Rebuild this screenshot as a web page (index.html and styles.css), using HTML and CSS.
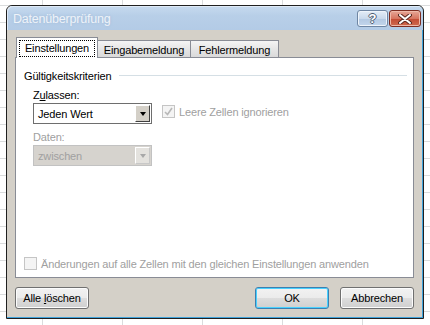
FILE: index.html
```html
<!DOCTYPE html>
<html lang="de">
<head>
<meta charset="UTF-8" />
<title>Datenüberprüfung</title>
<link rel="stylesheet" href="styles.css">
</head>
<body>

<div class="window">
  <div class="titlebar">
    <span class="title">Datenüberprüfung</span>
    <div class="caption-buttons">
      <div class="cap help">?</div>
      <div class="cap close">
        <svg width="14" height="10" viewBox="0 0 14 10">
          <path d="M2 1 L12 9 M12 1 L2 9" stroke="#5b2a22" stroke-width="4" stroke-linecap="round" />
          <path d="M2 1 L12 9 M12 1 L2 9" stroke="#ffffff" stroke-width="2" stroke-linecap="round" />
        </svg>
      </div>
    </div>
  </div>

  <div class="client">
    <div class="tabs">
      <div class="tab active"><span class="focus">Einstellungen</span></div>
      <div class="tab tab-input">Eingabemeldung</div>
      <div class="tab tab-error">Fehlermeldung</div>
    </div>

    <div class="panel">
      <div class="group-title">
        <span>Gültigkeitskriterien</span>
        <span class="rule"></span>
      </div>

      <div class="criteria">
        <div class="label">Z<u>u</u>lassen:</div>
        <div class="row">
          <div class="combo">
            <span class="combo-text">Jeden Wert</span>
            <span class="drop"><span class="arrow"></span></span>
          </div>
          <div class="check disabled">
            <span class="box checked">
              <svg width="11" height="11" viewBox="0 0 11 11">
                <path d="M2 6 L4.5 8.5 L9 2" fill="none" stroke="#b8b8b8" stroke-width="1.6" />
              </svg>
            </span>
            <span>Leere Zellen ignorieren</span>
          </div>
        </div>
        <div class="label disabled">Daten:</div>
        <div class="combo disabled">
          <span class="combo-text">zwischen</span>
          <span class="drop"><span class="arrow"></span></span>
        </div>
      </div>

      <div class="spacer"></div>

      <div class="check disabled">
        <span class="box"></span>
        <span>Änderungen auf alle Zellen mit den gleichen Einstellungen anwenden</span>
      </div>
    </div>

    <div class="buttons">
      <div class="btn"><span>Alle <u>l</u>öschen</span></div>
      <div class="spacer"></div>
      <div class="btn default">OK</div>
      <div class="btn">Abbrechen</div>
    </div>
  </div>
</div>

</body>
</html>
```

FILE: styles.css
```css
body {
  margin: 0;
  width: 430px;
  height: 325px;
  overflow: hidden;
  background-color: #ffffff;
  background-image:
    linear-gradient(to right, #dadcdd 1px, transparent 1px),
    linear-gradient(to bottom, #dadcdd 1px, transparent 1px);
  background-size: 80px 17px;
  background-position: 42px 5px;
  font-family: "Liberation Sans", Arial, sans-serif;
  font-size: 11px;
  letter-spacing: -0.15px;
  color: #000;
}
.window {
  margin: 5px 0 0 6px;
  width: 418px;
  height: 314px;
  box-sizing: border-box;
  border: 1px solid #202020;
  border-radius: 6px 6px 0 0;
  background: #d4d0c8;
  box-shadow: inset -1px -1px 0 #3fa3db;
  display: flex;
  flex-direction: column;
  overflow: hidden;
}
.titlebar {
  height: 24px;
  flex: none;
  display: flex;
  align-items: flex-start;
  background: linear-gradient(#c6daef, #b8cfe8 40%, #b3cbe6);
  box-shadow: inset 1px 1px 0 #dfeaf6;
  border-radius: 5px 5px 0 0;
}
.title {
  margin: 6px 0 0 6px;
  font-size: 12.5px;
  letter-spacing: -0.2px;
  color: #eef3f9;
  text-shadow: 0 0 3px #9fb9d6;
}
.caption-buttons {
  margin: 4px 2px 0 auto;
  display: flex;
  gap: 1px;
}
.cap {
  height: 17px;
  box-sizing: border-box;
  border-radius: 3px;
  display: flex;
  align-items: center;
  justify-content: center;
}
.help {
  width: 31px;
  border: 1px solid #6f86a3;
  background: linear-gradient(#e4edf7, #c9d9ec 50%, #b2c8e2 51%, #c3d6ec);
  box-shadow: inset 0 0 0 1px #eef4fb;
  color: #fff;
  font-weight: bold;
  font-size: 13px;
  text-shadow: 1px 0 0 #4d5d72, -1px 0 0 #4d5d72, 0 1px 0 #4d5d72, 0 -1px 0 #4d5d72;
}
.close {
  width: 32px;
  border: 1px solid #7d2d22;
  background: linear-gradient(#e6a797, #d77560 50%, #c24a33 51%, #cf6a4f);
  box-shadow: inset 0 0 0 1px #efb9a9;
}
.client {
  flex: 1;
  display: flex;
  flex-direction: column;
  padding: 7px 9px 9px 8px;
}
.tabs {
  height: 21px;
  display: flex;
  align-items: flex-end;
  margin-bottom: -1px;
  position: relative;
  z-index: 1;
}
.tab {
  height: 18px;
  box-sizing: border-box;
  border: 1px solid #898c95;
  border-left: none;
  background: linear-gradient(#f4f4f4, #e6e6e6 50%, #dadada);
  display: flex;
  align-items: center;
  justify-content: center;
  padding-top: 1px;
}
.tab.active {
  height: 21px;
  width: 82px;
  margin-left: 1px;
  border-left: 1px solid #898c95;
  border-bottom: none;
  background: #ffffff;
  padding-top: 0;
}
.tab-input {
  width: 93px;
}
.tab-error {
  width: 88px;
}
.focus {
  border: 1px dotted #000;
  padding: 1px 5px 2px;
}
.panel {
  height: 221px;
  box-sizing: border-box;
  border: 1px solid #898c95;
  background: #ffffff;
  display: flex;
  flex-direction: column;
  padding: 11px 6px 7px 8px;
}
.group-title {
  display: flex;
  align-items: center;
  height: 13px;
}
.rule {
  flex: 1;
  height: 1px;
  margin-left: 8px;
  background: #d5dfe5;
}
.criteria {
  padding-left: 9px;
}
.label {
  height: 13px;
  line-height: 13px;
  margin-top: 7px;
}
.disabled {
  color: #a0a0a0;
}
.row {
  display: flex;
  align-items: flex-start;
  margin-top: 1px;
}
.combo {
  width: 119px;
  height: 21px;
  box-sizing: border-box;
  border: 1px solid #6e6e6e;
  background: #fff;
  display: flex;
  align-items: center;
  padding: 1px;
}
.combo.disabled {
  margin-top: 1px;
  border-color: #c2c2c2;
  background: #d6d3ce;
}
.combo-text {
  flex: 1;
  padding-left: 3px;
}
.drop {
  width: 15px;
  height: 17px;
  box-sizing: border-box;
  border: 1px solid;
  border-color: #ffffff #404040 #404040 #ffffff;
  background: #d4d0c8;
  display: flex;
  align-items: center;
  justify-content: center;
}
.arrow {
  width: 0;
  height: 0;
  border-left: 3.5px solid transparent;
  border-right: 3.5px solid transparent;
  border-top: 4px solid #000;
}
.combo.disabled .drop {
  border-color: #ffffff #c8c8c8 #c8c8c8 #ffffff;
  background: #e4e2de;
}
.combo.disabled .arrow {
  border-top-color: #a8a8a8;
}
.check {
  display: flex;
  align-items: center;
  gap: 4px;
}
.row .check {
  margin: 2px 0 0 10px;
}
.box {
  width: 13px;
  height: 13px;
  box-sizing: border-box;
  border: 1px solid #c5c5c5;
  background: #f4f4f4;
  display: flex;
  align-items: center;
  justify-content: center;
}
.spacer {
  flex: 1;
}
.buttons {
  display: flex;
  margin-top: 9px;
  gap: 11px;
}
.btn {
  width: 74px;
  height: 22px;
  box-sizing: border-box;
  border: 1px solid #707070;
  border-radius: 3px;
  background: linear-gradient(#f2f2f2, #ebebeb 50%, #dddddd 51%, #cfcfcf);
  box-shadow: inset 0 0 0 1px #fcfcfc;
  display: flex;
  align-items: center;
  justify-content: center;
}
.btn.default {
  border-color: #3c7fb1;
  box-shadow: inset 0 0 0 1px #48d1ff;
}
```
